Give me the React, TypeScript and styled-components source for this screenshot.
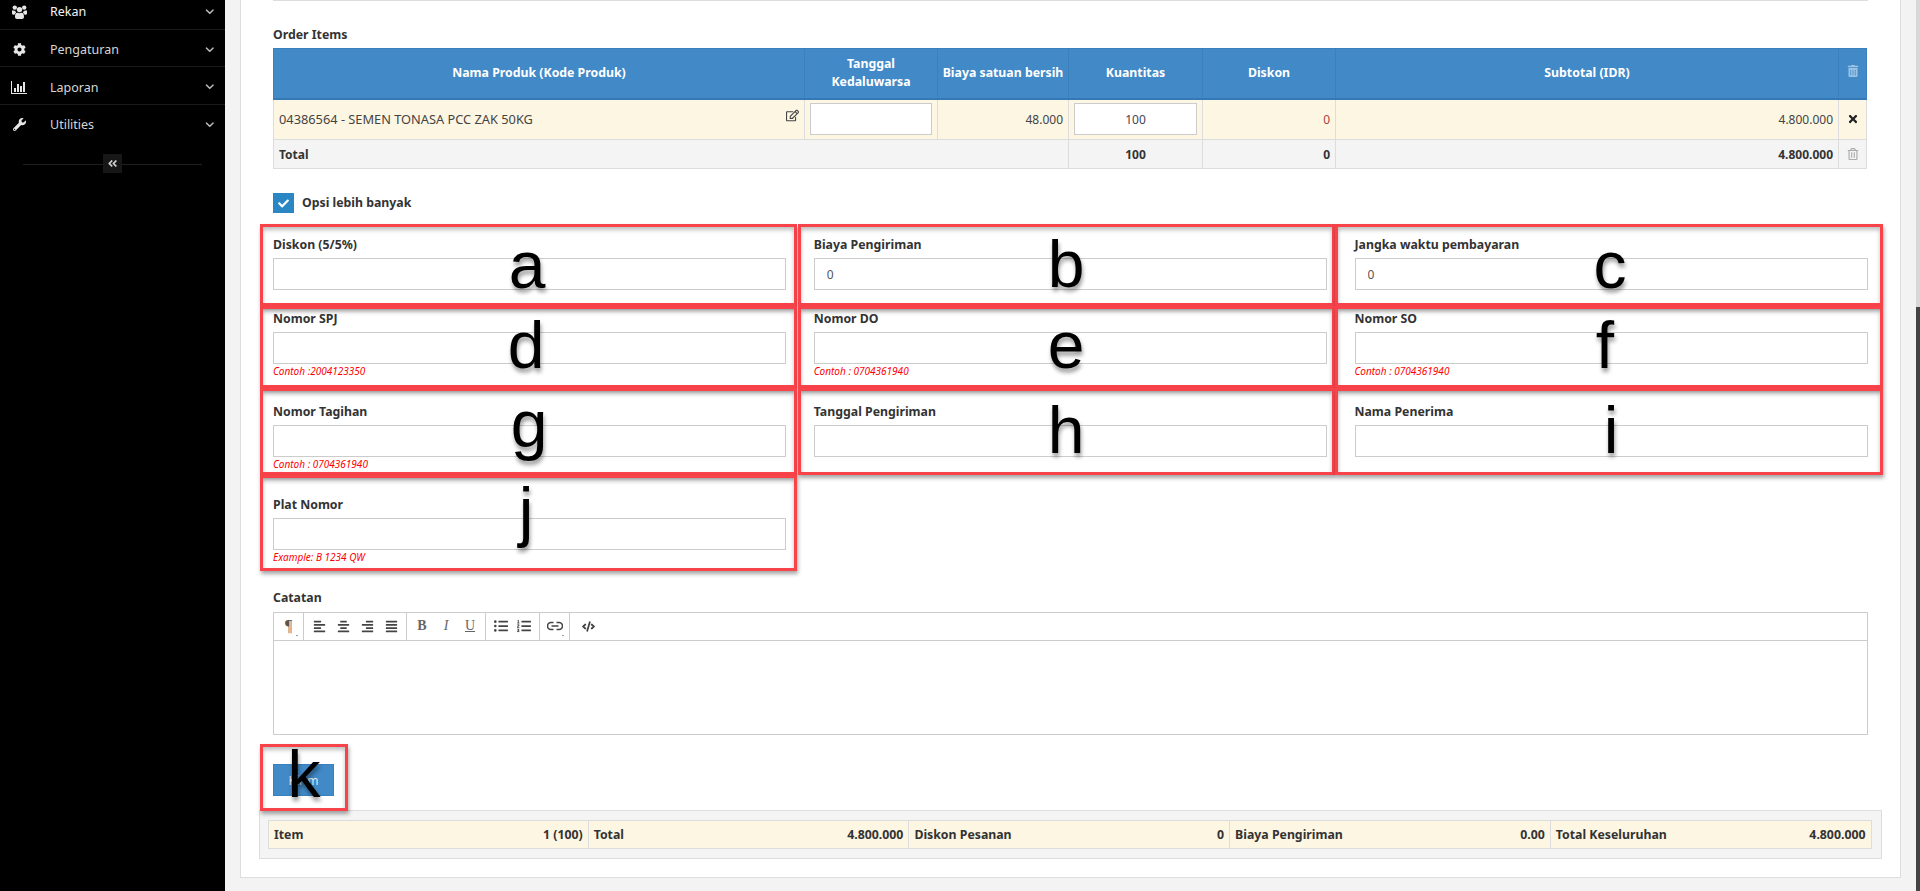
import React from "react";
import styled, { createGlobalStyle } from "styled-components";
import {
  FaCog, FaWrench, FaChevronDown, FaAngleDoubleLeft, FaRegEdit, FaRegTrashAlt, FaTimes, FaCheck,
  FaAlignLeft, FaAlignCenter, FaAlignRight, FaAlignJustify, FaListUl, FaListOl, FaCode, FaTrashAlt,
} from "react-icons/fa";

const FONT = `"Noto Sans", "Open Sans", sans-serif`;

const Global = createGlobalStyle`
  html, body { margin: 0; padding: 0; height: 891px; overflow: hidden; background: #f3f3f3; }
  * { box-sizing: border-box; }
  body { font-family: ${FONT}; font-size: 12px; color: #333; }
`;

const Page = styled.div`
  position: relative;
  display: flex;
  width: 1920px;
  height: 891px;
  overflow: hidden;
`;

const Sidebar = styled.aside`
  flex: 0 0 225px;
  background: #000;
  margin-top: -8px;
  padding-bottom: 8px;
`;

const NavRow = styled.div<{ $active?: boolean }>`
  display: flex;
  align-items: center;
  height: 37.67px;
  padding-top: 3px;
  border-bottom: 1px solid #1a1a1a;
  color: ${(p) => (p.$active ? "#f4f4f4" : "#d6d6d6")};
  font-size: 12.5px;
  &:nth-child(4) { border-bottom: none; padding-top: 2px; }
`;

const NavIcon = styled.span`
  flex: 0 0 50px;
  display: flex;
  justify-content: center;
  padding-right: 12px;
  font-size: 13px;
  color: #e6e6e6;
`;

const NavLabel = styled.span`
  flex: 1;
`;

const NavCaret = styled.span`
  flex: 0 0 30px;
  display: flex;
  justify-content: center;
  padding-right: 1px;
  font-size: 9.5px;
  color: #bdbdbd;
`;

const Collapse = styled.div`
  position: relative;
  display: flex;
  justify-content: center;
  margin: 11px 23px 0;
  height: 19px;
  &::before {
    content: "";
    position: absolute;
    left: 0;
    right: 0;
    top: 10px;
    height: 1px;
    background: #1f1f1f;
  }
`;

const CollapseButton = styled.span`
  position: relative;
  display: flex;
  align-items: center;
  justify-content: center;
  width: 19px;
  height: 19px;
  background: #171717;
  color: #cfcfcf;
  font-size: 11px;
`;

const Main = styled.main`
  flex: 1;
  padding-left: 15px;
  padding-right: 15px;
  background: #f3f3f3;
`;

const Panel = styled.section`
  height: 878px;
  padding: 0 32px 20px 32px;
  background: #fff;
  border: 1px solid #ddd;
  border-top: none;
`;

const Rule = styled.hr`
  margin: 0 0 24px;
  border: none;
  height: 1px;
  background: #ddd;
`;

const SectionTitle = styled.div`
  height: 23px;
  line-height: 20px;
  font-size: 12.3px;
  font-weight: 700;
  color: #333;
`;

const ItemsTable = styled.table`
  width: 1593px;
  table-layout: fixed;
  border-collapse: collapse;
  font-size: 12px;
`;

const Head = styled.th`
  height: 50px;
  padding: 0 3px;
  background: #4189c7;
  border: 1px solid #3c80bb;
  border-bottom: 2px solid #3478b5;
  color: #fff;
  font-weight: 700;
  font-size: 12.3px;
  line-height: 18px;
  text-align: center;
`;

const HeadIcon = styled(FaTrashAlt)`
  color: #9cc3e4;
  font-size: 12px;
`;

const Cell = styled.td<{ $align?: string; $tone?: string }>`
  position: relative;
  height: 41px;
  padding: 0 5px;
  background: #fdf6e3;
  border: 1px solid #ddd;
  text-align: ${(p) => p.$align || "left"};
  color: ${(p) => p.$tone || "#444"};
`;

const ProductName = styled.span`
  font-size: 12.8px;
`;

const TotalCell = styled.td<{ $align?: string }>`
  height: 29px;
  padding: 0 5px;
  background: #f4f4f4;
  border: 1px solid #ddd;
  font-weight: 700;
  text-align: ${(p) => p.$align || "left"};
  color: #333;
`;

const EditMark = styled(FaRegEdit)`
  position: absolute;
  right: 5px;
  top: 9px;
  font-size: 13px;
  color: #444;
`;

const CellInput = styled.input<{ $center?: boolean }>`
  display: block;
  width: 100%;
  height: 32px;
  padding: 0 6px;
  border: 1px solid #ccc;
  background: #fff;
  font: 12px ${FONT};
  color: #445;
  text-align: ${(p) => (p.$center ? "center" : "left")};
`;

const Remove = styled(FaTimes)`
  display: block;
  margin: 0 auto;
  font-size: 12px;
  color: #222;
`;

const TotalTrash = styled(FaRegTrashAlt)`
  display: block;
  margin: 0 auto;
  font-size: 12px;
  color: #aaa;
`;

const OptionRow = styled.div`
  display: flex;
  align-items: center;
  gap: 8px;
  height: 20px;
  margin: 24px 0 22px;
  font-weight: 700;
  font-size: 12.3px;
  color: #333;
`;

const OptionText = styled.span`
  position: relative;
  top: -1px;
`;

const CheckBox = styled.span`
  display: flex;
  align-items: center;
  justify-content: center;
  width: 21px;
  height: 20px;
  background: #2b87c4;
  color: #fff;
  font-size: 11px;
`;

const FormGrid = styled.div`
  display: grid;
  grid-template-columns: repeat(3, 513px);
  column-gap: 27.75px;
`;

const Field = styled.div`
  margin-bottom: 19px;
`;

const FieldLabel = styled.label`
  display: block;
  height: 23px;
  line-height: 20px;
  font-size: 12.3px;
  font-weight: 700;
  color: #333;
`;

const FieldInput = styled.input`
  display: block;
  width: 100%;
  height: 32px;
  padding: 0 12px;
  border: 1px solid #ccc;
  background: #fff;
  font: 12px ${FONT};
  color: #555;
`;

const Hint = styled.div`
  height: 19px;
  line-height: 14px;
  font-size: 10px;
  font-style: italic;
  color: #f00;
`;

const EditorTitle = styled.div`
  height: 24px;
  line-height: 20px;
  font-size: 12.3px;
  font-weight: 700;
  color: #333;
`;

const Editor = styled.div`
  height: 123px;
  border: 1px solid #ccc;
`;

const Toolbar = styled.div`
  display: flex;
  height: 28px;
  border-bottom: 1px solid #ccc;
`;

const ToolGroup = styled.div<{ $w: number }>`
  display: flex;
  align-items: center;
  justify-content: space-around;
  width: ${(p) => p.$w}px;
  padding: 0 3px 1px;
  border-right: 1px solid #ccc;
  &:last-child { border-right: none; }
`;

const Tool = styled.span<{ $size?: number; $caret?: boolean }>`
  position: relative;
  display: flex;
  align-items: center;
  justify-content: center;
  width: 20px;
  height: 20px;
  font-size: ${(p) => p.$size || 13}px;
  color: #444;
  &::after {
    content: "";
    display: ${(p) => (p.$caret ? "block" : "none")};
    position: absolute;
    right: 1px;
    bottom: 0;
    width: 2px;
    height: 1px;
    background: #999;
  }
`;

const ParagraphTool = styled(Tool)`
  font-family: "Liberation Serif", serif;
  font-size: 16px;
  color: #555;
`;

const SerifTool = styled(Tool)<{ $kind?: string }>`
  font-family: "Liberation Serif", serif;
  font-size: 14px;
  font-weight: ${(p) => (p.$kind === "b" ? 700 : 400)};
  font-style: ${(p) => (p.$kind === "i" ? "italic" : "normal")};
  text-decoration: ${(p) => (p.$kind === "u" ? "underline" : "none")};
  color: #666;
`;

const Submit = styled.button`
  display: block;
  width: 61px;
  height: 32px;
  margin: 29px 0 14px;
  padding: 0;
  background: #4189c7;
  border: 1px solid #3c80bb;
  color: #dfeaf5;
  font: 12px ${FONT};
`;

const Summary = styled.div`
  display: grid;
  grid-template-columns: repeat(5, 1fr);
  margin: 0 -14px;
  padding: 9px 9px 9px 8px;
  background: #f4f4f4;
  border: 1px solid #ddd;
`;

const SummaryCell = styled.div`
  display: flex;
  align-items: center;
  justify-content: space-between;
  height: 29px;
  padding: 0 5px;
  background: #fdf6e3;
  border: 1px solid #ddd;
  border-left: none;
  font-weight: 700;
  font-size: 12.3px;
  color: #333;
  &:first-child { border-left: 1px solid #ddd; }
`;

const ScrollTrack = styled.div`
  flex: 0 0 5px;
  padding-top: 307px;
  background: #d8d8d8;
`;

const ScrollThumb = styled.div`
  height: 584px;
  background: #444;
`;

const Marker = styled.div<{ $x: number; $y: number; $w: number; $h: number }>`
  position: absolute;
  left: ${(p) => p.$x}px;
  top: ${(p) => p.$y}px;
  width: ${(p) => p.$w}px;
  height: ${(p) => p.$h}px;
  border: 3px solid #f8434a;
  box-shadow: 1px 3px 4px rgba(0, 0, 0, 0.35), inset 0 3px 4px rgba(0, 0, 0, 0.25);
  pointer-events: none;
`;

const Letter = styled.div<{ $x: number; $base: number; $size?: number }>`
  position: absolute;
  left: ${(p) => p.$x}px;
  top: ${(p) => p.$base - (p.$size ?? 66) * 0.847}px;
  transform: translateX(-50%);
  font: ${(p) => p.$size ?? 66}px/1 "Liberation Sans", Arial, sans-serif;
  color: #000;
  text-shadow: 1px 4px 4px rgba(0, 0, 0, 0.4);
  pointer-events: none;
`;

const fields = [
  { label: "Diskon (5/5%)" },
  { label: "Biaya Pengiriman", value: "0" },
  { label: "Jangka waktu pembayaran", value: "0" },
  { label: "Nomor SPJ", hint: "Contoh :2004123350" },
  { label: "Nomor DO", hint: "Contoh : 0704361940" },
  { label: "Nomor SO", hint: "Contoh : 0704361940" },
  { label: "Nomor Tagihan", hint: "Contoh : 0704361940" },
  { label: "Tanggal Pengiriman" },
  { label: "Nama Penerima" },
  { label: "Plat Nomor", hint: "Example: B 1234 QW" },
];

const markers = [
  { x: 260, y: 224, w: 537, h: 82 },
  { x: 798, y: 224, w: 537, h: 82 },
  { x: 1335, y: 224, w: 548, h: 82 },
  { x: 260, y: 306, w: 537, h: 82 },
  { x: 798, y: 306, w: 537, h: 82 },
  { x: 1335, y: 306, w: 548, h: 82 },
  { x: 260, y: 388, w: 537, h: 87 },
  { x: 798, y: 388, w: 537, h: 87 },
  { x: 1335, y: 388, w: 548, h: 87 },
  { x: 260, y: 475, w: 537, h: 96 },
  { x: 260, y: 744, w: 88, h: 67 },
];

const letters = [
  { t: "a", x: 527, base: 288 },
  { t: "b", x: 1066, base: 287 },
  { t: "c", x: 1610, base: 288 },
  { t: "d", x: 526, base: 368 },
  { t: "e", x: 1066, base: 368 },
  { t: "f", x: 1605, base: 368 },
  { t: "g", x: 529, base: 447 },
  { t: "h", x: 1066, base: 453 },
  { t: "i", x: 1611, base: 453 },
  { t: "j", x: 526, base: 534 },
  { t: "k", x: 304, base: 797 },
];

const summary = [
  ["Item", "1 (100)"],
  ["Total", "4.800.000"],
  ["Diskon Pesanan", "0"],
  ["Biaya Pengiriman", "0.00"],
  ["Total Keseluruhan", "4.800.000"],
];

const UsersIcon = () => (
  <svg width="15" height="14" viewBox="0 0 15 14" fill="currentColor">
    <circle cx="7.5" cy="4.6" r="2.7" />
    <circle cx="2.8" cy="2.6" r="2.2" />
    <circle cx="12.2" cy="2.6" r="2.2" />
    <path d="M3.8 8.2c.8-.6 1.6-.7 2.2-.4.9.5 2.1.5 3 0 .6-.3 1.4-.2 2.2.4.6.7.8 2.4.8 3.8 0 1.2-.8 2-1.9 2H4.900c-1.100 0-1.900-.8-1.900-2 0-1.400.2-3.100.8-3.800z" />
    <path d="M0 6.500C0 5.600.6 5.200 1.300 5.400c.7.4 1.400.4 2 .3-.1.700.3 1.300.9 1.700-.9.500-1.500 1.300-1.700 2.300H1.200C.5 9.700 0 9.200 0 8.500z" />
    <path d="M15 6.500c0-.9-.6-1.300-1.300-1.100-.7.4-1.400.4-2 .3.100.7-.3 1.300-.9 1.700.9.500 1.500 1.300 1.700 2.300h1.300c.7 0 1.200-.5 1.200-1.200z" />
  </svg>
);

const BarsIcon = () => (
  <svg width="16" height="13" viewBox="0 0 16 13" fill="currentColor">
    <path d="M0 0h1v12h15v1H0z" />
    <path d="M3 7h2v4H3zM6 3h2v8H6zM9 5h2v6H9zM12 1h2v10h-2z" />
  </svg>
);

const LinkIcon = () => (
  <svg width="16" height="10" viewBox="0 0 16 10" fill="none" stroke="currentColor" strokeWidth="1.6">
    <path d="M6.500 1.500H4a3.500 3.500 0 0 0 0 7h2.500M9.500 1.500H12a3.500 3.500 0 0 1 0 7H9.500M4.500 5h7" />
  </svg>
);

const NavItem = ({ icon, label, active }: { icon: React.ReactNode; label: string; active?: boolean }) => (
  <NavRow $active={active}>
    <NavIcon>{icon}</NavIcon>
    <NavLabel>{label}</NavLabel>
    <NavCaret><FaChevronDown /></NavCaret>
  </NavRow>
);

export default function App() {
  return (
    <Page>
      <Global />
      <Sidebar>
        <NavItem icon={<UsersIcon />} label="Rekan" active />
        <NavItem icon={<FaCog />} label="Pengaturan" />
        <NavItem icon={<BarsIcon />} label="Laporan" />
        <NavItem icon={<FaWrench />} label="Utilities" />
        <Collapse>
          <CollapseButton><FaAngleDoubleLeft /></CollapseButton>
        </Collapse>
      </Sidebar>
      <Main>
        <Panel>
          <Rule />
          <SectionTitle>Order Items</SectionTitle>
          <ItemsTable>
            <colgroup>
              <col width="531" />
              <col width="133" />
              <col width="131" />
              <col width="134" />
              <col width="133" />
              <col width="503" />
              <col width="28" />
            </colgroup>
            <thead>
              <tr>
                <Head>Nama Produk (Kode Produk)</Head>
                <Head>Tanggal<br />Kedaluwarsa</Head>
                <Head>Biaya satuan bersih</Head>
                <Head>Kuantitas</Head>
                <Head>Diskon</Head>
                <Head>Subtotal (IDR)</Head>
                <Head><HeadIcon /></Head>
              </tr>
            </thead>
            <tbody>
              <tr>
                <Cell><ProductName>04386564 - SEMEN TONASA PCC ZAK 50KG</ProductName><EditMark /></Cell>
                <Cell><CellInput readOnly /></Cell>
                <Cell $align="right">48.000</Cell>
                <Cell><CellInput $center readOnly defaultValue="100" /></Cell>
                <Cell $align="right" $tone="#a94442">0</Cell>
                <Cell $align="right">4.800.000</Cell>
                <Cell><Remove /></Cell>
              </tr>
              <tr>
                <TotalCell colSpan={3}>Total</TotalCell>
                <TotalCell $align="center">100</TotalCell>
                <TotalCell $align="right">0</TotalCell>
                <TotalCell $align="right">4.800.000</TotalCell>
                <TotalCell><TotalTrash /></TotalCell>
              </tr>
            </tbody>
          </ItemsTable>
          <OptionRow>
            <CheckBox><FaCheck /></CheckBox>
            <OptionText>Opsi lebih banyak</OptionText>
          </OptionRow>
          <FormGrid>
            {fields.map((f) => (
              <Field key={f.label}>
                <FieldLabel>{f.label}</FieldLabel>
                <FieldInput readOnly defaultValue={f.value} />
                {f.hint && <Hint>{f.hint}</Hint>}
              </Field>
            ))}
          </FormGrid>
          <EditorTitle>Catatan</EditorTitle>
          <Editor>
            <Toolbar>
              <ToolGroup $w={30}><ParagraphTool $caret>¶</ParagraphTool></ToolGroup>
              <ToolGroup $w={103}>
                <Tool><FaAlignLeft /></Tool>
                <Tool><FaAlignCenter /></Tool>
                <Tool><FaAlignRight /></Tool>
                <Tool><FaAlignJustify /></Tool>
              </ToolGroup>
              <ToolGroup $w={79}>
                <SerifTool $kind="b">B</SerifTool>
                <SerifTool $kind="i">I</SerifTool>
                <SerifTool $kind="u">U</SerifTool>
              </ToolGroup>
              <ToolGroup $w={54}>
                <Tool $size={14}><FaListUl /></Tool>
                <Tool $size={14}><FaListOl /></Tool>
              </ToolGroup>
              <ToolGroup $w={30}><Tool $caret><LinkIcon /></Tool></ToolGroup>
              <ToolGroup $w={36}><Tool $size={13}><FaCode /></Tool></ToolGroup>
            </Toolbar>
          </Editor>
          <Submit>Kirim</Submit>
          <Summary>
            {summary.map(([k, v]) => (
              <SummaryCell key={k}>
                <span>{k}</span>
                <span>{v}</span>
              </SummaryCell>
            ))}
          </Summary>
        </Panel>
      </Main>
      <ScrollTrack><ScrollThumb /></ScrollTrack>
      {markers.map((m) => (
        <Marker key={`${m.x}-${m.y}`} $x={m.x} $y={m.y} $w={m.w} $h={m.h} />
      ))}
      {letters.map((l) => (
        <Letter key={l.t} $x={l.x} $base={l.base}>{l.t}</Letter>
      ))}
    </Page>
  );
}
